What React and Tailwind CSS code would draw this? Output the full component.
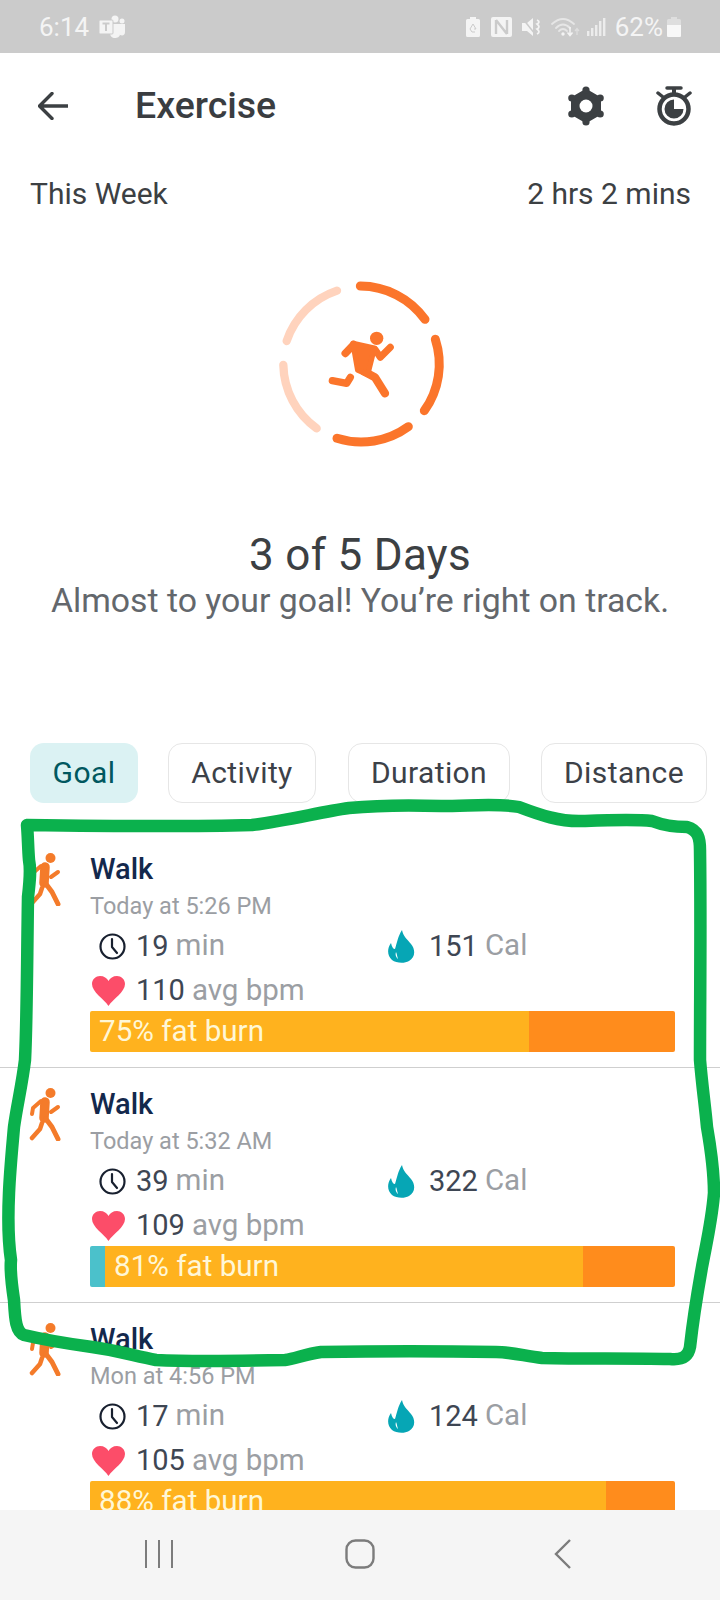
import React from "react";

function Runner() {
  return (
    <svg width="220" height="200" viewBox="0 0 660 600" className="block">
      <g fill="none" strokeLinecap="round">
        <g stroke="#ffd3bd" strokeWidth="25">
          <path d="M197 505 A240 240 0 0 1 97 315" />
          <path d="M107 243 A240 240 0 0 1 258 92" />
        </g>
        <g stroke="#fb752b" strokeWidth="27">
          <path d="M328 78 A240 240 0 0 1 522 178" />
          <path d="M553 238 A240 240 0 0 1 520 452" />
          <path d="M472 500 A240 240 0 0 1 258 535" />
        </g>
        <g stroke="#fb752b" strokeLinejoin="round">
          <path d="M308 254 L283 280" strokeWidth="23" />
          <path d="M372 268 L388 292 L418 262" strokeWidth="21" />
          <path d="M340 335 L372 352 L402 400" strokeWidth="25" />
          <path d="M298 352 L287 370 L244 362" strokeWidth="22" />
        </g>
      </g>
      <circle cx="377" cy="235" r="20" fill="#fb752b" />
      <path d="M306 250 L370 264 L350 344 L320 330 Z" fill="#fb752b" stroke="#fb752b" strokeWidth="16" strokeLinejoin="round" />
    </svg>
  );
}

function WalkIcon() {
  return (
    <svg width="32" height="54" viewBox="0 0 32 54" className="block">
      <circle cx="21.5" cy="6" r="5" fill="#f47b2a" />
      <g fill="none" stroke="#f47b2a" strokeLinecap="round" strokeLinejoin="round">
        <path d="M16 15 L15 31" strokeWidth="9.5" />
        <path d="M12 14 L4 21 L3 27" strokeWidth="4" />
        <path d="M22 25 L29 20" strokeWidth="4" />
        <path d="M17 32 L23 40 L29 52" strokeWidth="5" />
        <path d="M13 36 L11 42 L3 51" strokeWidth="4.5" />
      </g>
    </svg>
  );
}

function Clock() {
  return (
    <svg width="27" height="27" viewBox="0 0 27 27" className="block">
      <circle cx="13.5" cy="13.5" r="12" fill="none" stroke="#18202f" strokeWidth="2.2" />
      <path d="M13 6 L13 14 L18 20" fill="none" stroke="#18202f" strokeWidth="2.2" strokeLinecap="round" strokeLinejoin="round" />
    </svg>
  );
}

function Flame() {
  return (
    <svg width="27" height="33" viewBox="0 0 27 33" className="block">
      <path
        fillRule="evenodd"
        fill="#06a6b5"
        d="M14 0 C15 6 19 9 23 14 C28 20 27 28 21 31 C16 34 8 33 4 30 C-1 26 -1 18 3 13 C4 17 5 19 7 19 C9 13 10 6 14 0 Z M8 22 C7 25 8 27 10 29 C9 26 9 24 8 22 Z"
      />
    </svg>
  );
}

function Heart() {
  return (
    <svg width="33" height="30" viewBox="0 0 33 30" className="block">
      <path fill="#fc4d69" d="M16.5 30 C12 23 0 16 0 8 C0 3 4 0 8 0 C12 0 15 2 16.5 5 C18 2 21 0 25 0 C29 0 33 3 33 8 C33 16 21 23 16.5 30 Z" />
    </svg>
  );
}

function Stat({ icon, iconBox, value, unit }) {
  return (
    <div className="flex items-center h-full">
      <div className={iconBox}>{icon}</div>
      <span className="text-[#3e4653] text-[29px] leading-none">{value}</span>
      <span className="text-[#9b9ea3] text-[29.5px] leading-none ml-[7px]">{unit}</span>
    </div>
  );
}

function Card({ date, min, cal, bpm, teal, yellowW, label, border = true }) {
  return (
    <div className={`flex h-[235px] shrink-0 pl-[29px] pt-[19px] ${border ? "border-b border-[#cfcfcf]" : ""}`}>
      <div className="w-[61px] shrink-0">
        <WalkIcon />
      </div>
      <div className="w-[585px] flex flex-col">
        <div className="h-[35px] flex items-center text-[#13284c] text-[29px] font-medium leading-none">Walk</div>
        <div className="h-[40px] flex items-center text-[#9b9ea3] text-[23.5px] leading-none">{date}</div>
        <div className="h-[38px] flex">
          <div className="w-[298px]">
            <Stat icon={<Clock />} iconBox="w-[46px] pl-[9px] shrink-0" value={min} unit="min" />
          </div>
          <Stat icon={<Flame />} iconBox="w-[41px] shrink-0" value={cal} unit="Cal" />
        </div>
        <div className="h-[41px] mt-[5px]">
          <Stat icon={<Heart />} iconBox="w-[46px] pl-[2px] shrink-0" value={bpm} unit="avg bpm" />
        </div>
        <div className="h-[41px] flex rounded-[2px] overflow-hidden shrink-0">
          {teal ? <div className="w-[15px] bg-[#4bc1cb]" /> : null}
          <div
            className="flex items-center bg-[#ffb21e] text-[#fff7d6] text-[29.6px] leading-none pl-[9px]"
            style={{ width: yellowW }}
          >
            {label}
          </div>
          <div className="flex-1 bg-[#ff8c1c]" />
        </div>
      </div>
    </div>
  );
}

function Tab({ children, active, w, className = "" }) {
  return (
    <div
      className={
        (active
          ? "h-[60px] flex items-center justify-center rounded-[14px] bg-[#dbf2f3] text-[#00585f] text-[30px] tracking-[0.4px] leading-none shrink-0 "
          : "h-[60px] flex items-center justify-center rounded-[14px] border border-[#e6e6e6] text-[#3c4148] text-[30px] tracking-[0.4px] leading-none shrink-0 ") + className
      }
      style={{ width: w }}
    >
      {children}
    </div>
  );
}

export default function App() {
  return (
    <div
      className="relative w-[720px] h-[1600px] overflow-hidden bg-white flex flex-col"
      style={{ fontFamily: "Roboto, sans-serif" }}
    >
      {/* status bar */}
      <div className="h-[53px] shrink-0 bg-[#cbcbcb] flex items-center text-[#f4f4f4] pl-[39px] pr-[39px]">
        <span className="text-[26px] leading-none w-[60px]">6:14</span>
        <svg width="27" height="24" viewBox="0 0 27 24" className="block">
          <circle cx="16" cy="4" r="3.5" fill="#f4f4f4" />
          <circle cx="23" cy="6" r="2.5" fill="#f4f4f4" />
          <path d="M11 9 H21 V19 C21 22 18 23 16 23 C13 23 11 21 11 18 Z" fill="#f4f4f4" />
          <path d="M21 9 H26 V17 C26 20 24 21 21 20 Z" fill="#f4f4f4" />
          <rect x="0" y="5" width="14" height="14" rx="1" fill="#f4f4f4" stroke="#cbcbcb" strokeWidth="1" />
          <path d="M3.5 8.5 H10.5 M7 8.5 V16" stroke="#cbcbcb" strokeWidth="2" />
        </svg>
        <div className="ml-auto flex items-center">
          <svg width="14" height="20" viewBox="0 0 14 20" className="block mr-[11px]">
            <path d="M4 0 H10 V2 H12.5 Q14 2 14 3.5 V18.5 Q14 20 12.5 20 H1.5 Q0 20 0 18.5 V3.5 Q0 2 1.5 2 H4 Z" fill="#f4f4f4" />
            <path d="M7 7 L10 12 H8 M7 7 L4 12 L6 15 H9" fill="none" stroke="#cbcbcb" strokeWidth="1" />
          </svg>
          <svg width="21" height="20" viewBox="0 0 21 20" className="block mr-[10px]">
            <rect width="21" height="20" rx="2" fill="#f4f4f4" />
            <path d="M5 3 V17 M16 3 V17 M5 3 L16 17" fill="none" stroke="#cbcbcb" strokeWidth="2.4" />
          </svg>
          <svg width="20" height="18" viewBox="0 0 20 18" className="block mr-[9px]">
            <path d="M0 5 H5 L11 0 V18 L5 13 H0 Z" fill="#f4f4f4" />
            <path d="M1 1 L13 16" stroke="#cbcbcb" strokeWidth="1.5" />
            <path d="M15 2 Q19 4 15 6 Q19 9 15 11 Q19 14 15 16" fill="none" stroke="#f4f4f4" strokeWidth="1.7" />
          </svg>
          <svg width="30" height="20" viewBox="0 0 30 20" className="block mr-[6px]">
            <g fill="none" stroke="#e6e6e6" strokeWidth="1.8" strokeLinecap="round">
              <path d="M1 7 Q12 -3 23 7" />
              <path d="M5 11 Q12 4 19 11" />
              <path d="M8 14 Q12 10 16 14" />
            </g>
            <circle cx="12" cy="17" r="1.7" fill="#f4f4f4" />
            <path d="M19 10 V18 M16.5 15.5 L19 18.5 L21.5 15.5" fill="none" stroke="#f4f4f4" strokeWidth="1.5" />
            <path d="M26 18 V12 M24 14 L26 11.5 L28 14" fill="none" stroke="#dedede" strokeWidth="1.3" />
          </svg>
          <svg width="19" height="18" viewBox="0 0 19 18" className="block mr-[9px]">
            <g fill="#ececec">
              <rect x="0" y="13" width="2.4" height="5" />
              <rect x="4" y="10" width="2.4" height="8" />
              <rect x="8" y="7" width="2.4" height="11" />
              <rect x="12" y="3" width="2.4" height="15" />
              <rect x="16" y="0" width="2.4" height="18" />
            </g>
          </svg>
          <span className="text-[26px] leading-none">62%</span>
          <svg width="14" height="20" viewBox="0 0 14 20" className="block ml-[4px]">
            <path d="M4 0 H10 V2 H12.5 Q14 2 14 3.5 V18.5 Q14 20 12.5 20 H1.5 Q0 20 0 18.5 V3.5 Q0 2 1.5 2 H4 Z" fill="#dedede" />
            <path d="M0 8 H14 V18.5 Q14 20 12.5 20 H1.5 Q0 20 0 18.5 Z" fill="#f8f8f8" />
          </svg>
        </div>
      </div>

      {/* app bar */}
      <div className="h-[106px] shrink-0 flex items-center pl-[38px] pr-[28px]">
        <svg width="30" height="28" viewBox="0 0 30 28" className="block mr-[67px] shrink-0">
          <path d="M14 1.5 L1.5 14 L14 26.5 M2 14 H30" fill="none" stroke="#3c4043" strokeWidth="3.4" strokeLinecap="round" strokeLinejoin="round" />
        </svg>
        <span className="text-[#3a3d41] text-[37.5px] font-medium leading-none">Exercise</span>
        <svg width="36" height="40" viewBox="-18 -20 36 40" className="block ml-auto mr-[54px] shrink-0 translate-x-[2px]">
          <g fill="#3c4043">
            <path d="M0 -15 L13 -7.5 L13 7.5 L0 15 L-13 7.5 L-13 -7.5 Z" stroke="#3c4043" strokeWidth="4" strokeLinejoin="round" />
            <circle cx="0" cy="-16" r="3.6" />
            <circle cx="0" cy="16" r="3.6" />
            <circle cx="14.2" cy="-8" r="3.6" />
            <circle cx="-14.2" cy="-8" r="3.6" />
            <circle cx="14.2" cy="8" r="3.6" />
            <circle cx="-14.2" cy="8" r="3.6" />
          </g>
          <circle cx="0" cy="0" r="6.5" fill="#fff" />
        </svg>
        <svg width="36" height="40" viewBox="0 0 36 40" className="block shrink-0">
          <circle cx="18" cy="23" r="14.5" fill="none" stroke="#3c4043" strokeWidth="4.5" />
          <path d="M18 23 V13.5 A9.5 9.5 0 1 0 27.5 23 Z" fill="#3c4043" />
          <path d="M11 2 H25" stroke="#3c4043" strokeWidth="3.5" strokeLinecap="round" />
          <path d="M18 2 V8" stroke="#3c4043" strokeWidth="4" />
          <path d="M2 7 L7 11 M34 7 L29 11" stroke="#3c4043" strokeWidth="3.5" strokeLinecap="round" />
        </svg>
      </div>

      {/* week summary */}
      <div className="h-[70px] shrink-0 flex items-center justify-between pl-[30px] pr-[29px] text-[#3c4043] text-[30px] leading-none">
        <span>This Week</span>
        <span>2 hrs 2 mins</span>
      </div>

      {/* ring */}
      <div className="flex justify-center pl-[2px] mt-[31px] shrink-0">
        <Runner />
      </div>

      {/* goal text */}
      <div className="flex flex-col items-center mt-[70px] shrink-0">
        <div className="text-[#3c4043] text-[44px] leading-[51px] tracking-[0.3px]">3 of 5 Days</div>
        <div className="text-[#63676c] text-[33.8px] leading-[40px] whitespace-nowrap">Almost to your goal! You’re right on track.</div>
      </div>

      {/* tabs */}
      <div className="flex pl-[30px] mt-[122px] shrink-0">
        <Tab active w={108}>Goal</Tab>
        <Tab w={148} className="ml-[30px]">Activity</Tab>
        <Tab w={162} className="ml-[32px]">Duration</Tab>
        <Tab w={166} className="ml-[31px]">Distance</Tab>
      </div>

      {/* list */}
      <div className="flex-1 min-h-0 overflow-hidden mt-[30px] flex flex-col">
        <Card date="Today at 5:26 PM" min="19" cal="151" bpm="110" yellowW={439} label="75% fat burn" />
        <Card date="Today at 5:32 AM" min="39" cal="322" bpm="109" teal yellowW={478} label="81% fat burn" />
        <Card date="Mon at 4:56 PM" min="17" cal="124" bpm="105" yellowW={516} label="88% fat burn" border={false} />
      </div>

      {/* nav */}
      <div className="h-[90px] shrink-0 bg-[#f5f5f5] relative flex items-center">
        <div className="w-[720px] flex items-center pl-[145px] -mt-[3px]">
          <svg width="28" height="28" viewBox="0 0 28 28" className="block mr-[172px]">
            <path d="M1 0 V28 M14 0 V28 M27 0 V28" stroke="#7c7c7c" strokeWidth="2" />
          </svg>
          <svg width="30" height="30" viewBox="0 0 30 30" className="block mr-[179px]">
            <rect x="1.5" y="1.5" width="27" height="27" rx="9" fill="none" stroke="#7c7c7c" strokeWidth="2.4" />
          </svg>
          <svg width="18" height="30" viewBox="0 0 18 30" className="block">
            <path d="M16 1 L2 15 L16 29" fill="none" stroke="#7c7c7c" strokeWidth="2.4" />
          </svg>
        </div>
      </div>

      {/* hand-drawn annotation */}
      <svg className="absolute left-0 top-0 pointer-events-none" width="720" height="1600" viewBox="0 0 720 1600">
        <path
          d="M27 825 C100 826 180 827 252 825 C290 820 320 812 349 808 C380 805 410 805 441 806 C470 806 500 803 519 807 C540 815 560 822 583 821 C610 820 635 819 652 821 C665 826 675 827 687 827 C698 830 700 838 700 850 C701 920 700 1000 700 1060 C702 1085 705 1105 707 1127 C711 1150 714 1170 714 1193 C712 1220 706 1245 702 1267 C697 1295 693 1320 690 1347 C688 1358 680 1360 670 1359 C625 1358 585 1359 542 1358 C525 1356 510 1352 496 1352 C440 1351 380 1351 321 1352 C305 1354 295 1359 285 1360 C240 1361 195 1362 156 1360 C135 1356 115 1350 92 1347 C70 1344 45 1340 24 1335 C16 1332 15 1320 14 1300 C11 1280 10 1270 11 1260 C8 1240 8 1215 9 1193 C10 1170 12 1150 14 1127 C17 1105 22 1085 25 1060 C27 1020 27 960 28 897 C30 880 31 870 29 860 C28 848 28 836 27 825 Z"
          fill="none"
          stroke="#0bb14d"
          strokeWidth="12.5"
          strokeLinejoin="round"
        />
      </svg>
    </div>
  );
}
